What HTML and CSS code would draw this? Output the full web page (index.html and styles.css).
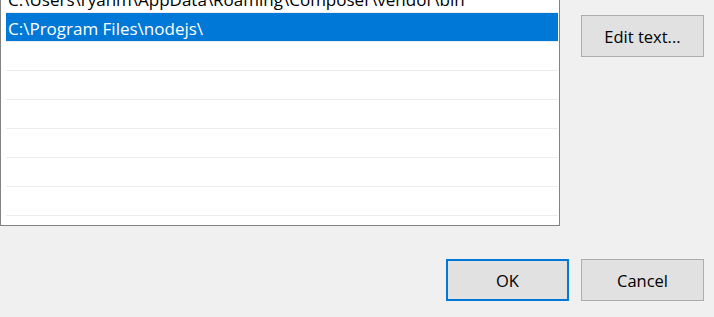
FILE: index.html
```html
<!DOCTYPE html>
<html>
<head>
<meta charset="utf-8">
<link rel="stylesheet" href="styles.css">
</head>
<body>
<div class="dialog">
  <div class="top">
    <div class="list">
      <div class="row">C:\Users\ryanm\AppData\Roaming\Composer\vendor\bin</div>
      <div class="row selected">C:\Program Files\nodejs\</div>
      <div class="row"></div>
      <div class="row"></div>
      <div class="row"></div>
      <div class="row"></div>
      <div class="row"></div>
      <div class="row"></div>
    </div>
    <div class="side">
      <button class="btn">Edit text...</button>
    </div>
  </div>
  <div class="bottom">
    <button class="btn default">OK</button>
    <button class="btn">Cancel</button>
  </div>
</div>
</body>
</html>
```

FILE: styles.css
```css
html, body {
  margin: 0;
  padding: 0;
  background: #f0f0f0;
  overflow: hidden;
}
body {
  font-family: "Open Sans", "Noto Sans", sans-serif;
  font-size: 17px;
  color: #000;
}
.dialog {
  display: flex;
  flex-direction: column;
  width: 714px;
  height: 317px;
}
.top {
  display: flex;
  gap: 21px;
  margin-top: -17px;
}
.list {
  box-sizing: border-box;
  width: 560px;
  height: 243px;
  background: #fff;
  border: 1px solid #828282;
  padding: 0 1px 0 5px;
  overflow: hidden;
}
.row {
  box-sizing: border-box;
  height: 29px;
  border-bottom: 1px solid #ececec;
  line-height: 28px;
  padding: 2px 0 0 2px;
  white-space: nowrap;
}
.row.selected {
  background: #0078d7;
  color: #fff;
}
.side {
  display: flex;
  flex-direction: column;
  padding-top: 32px;
}
.btn {
  box-sizing: border-box;
  width: 123px;
  height: 42px;
  background: #e1e1e1;
  border: 1px solid #adadad;
  font-family: inherit;
  font-size: 16.5px;
  color: #000;
  padding: 1px 0 0;
  margin: 0;
}
.btn.default {
  border: 2px solid #0078d7;
}
.bottom {
  display: flex;
  justify-content: flex-end;
  gap: 12px;
  padding-right: 10px;
  margin-top: 33px;
}
```
